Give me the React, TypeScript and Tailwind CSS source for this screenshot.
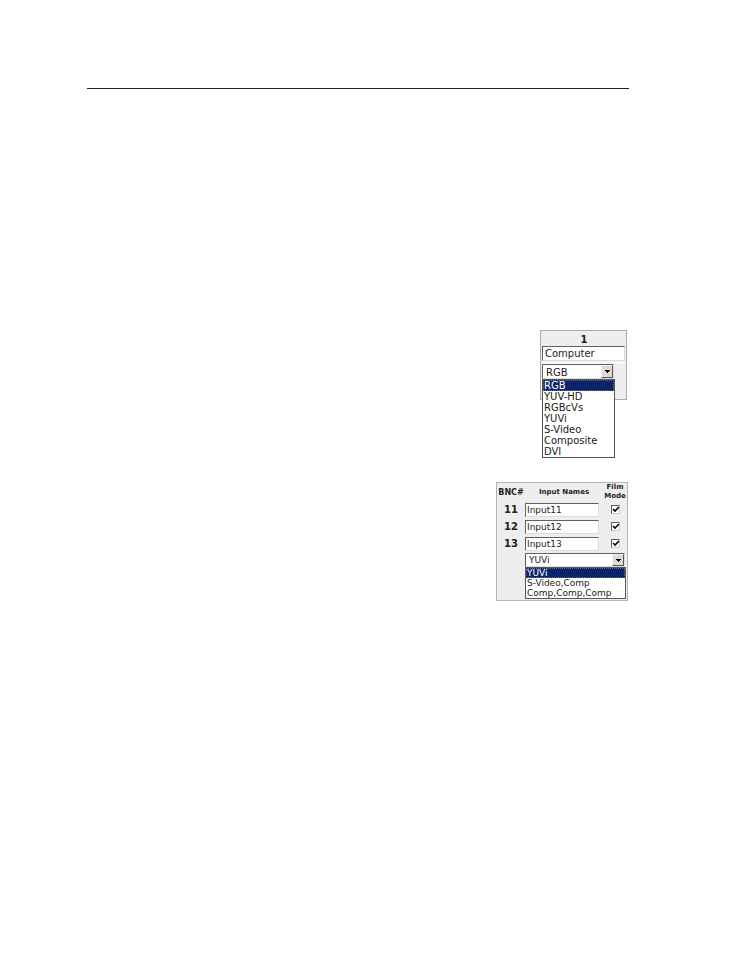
import React, { useState } from 'react';
import { clsx } from 'clsx';

const inputTypes = ['RGB', 'YUV-HD', 'RGBcVs', 'YUVi', 'S-Video', 'Composite', 'DVI'];
const bncTypes = ['YUVi', 'S-Video,Comp', 'Comp,Comp,Comp'];
const bncRows = [
  { id: 11, name: 'Input11' },
  { id: 12, name: 'Input12' },
  { id: 13, name: 'Input13' },
];

const fieldStyle =
  'block rounded-none bg-white border border-t-[#606060] border-l-[#606060] border-r-[#dcdcdc] border-b-[#dcdcdc] text-[#222] outline-none';

const OpenSelect = ({
  label,
  options,
  className,
  rowClass,
}: {
  label: string;
  options: string[];
  className?: string;
  rowClass: string;
}) => {
  const [value, setValue] = useState(options[0]);

  return (
    <div className={clsx('relative', className)}>
      <select
        aria-label={label}
        value={value}
        onChange={(e) => setValue(e.target.value)}
        className={clsx(fieldStyle, 'appearance-none w-full h-full pl-[3px]')}>
        {options.map((item) => (
          <option key={item}>{item}</option>
        ))}
      </select>
      <span className="absolute right-px inset-y-px w-3 flex items-center justify-center bg-[#dedad5] border border-t-[#f4f4f4] border-l-[#f4f4f4] border-r-[#555] border-b-[#555] pointer-events-none">
        <svg viewBox="0 0 5 3" className="w-[5px] h-[3px]" shapeRendering="crispEdges">
          <path d="M0 0h5v1h-1v1h-1v1h-1v-1h-1v-1h-1z" fill="#000" />
        </svg>
      </span>
      {/* Dropped down list */}
      <ul
        role="listbox"
        aria-label={label}
        className="absolute top-full left-0 -right-px z-10 bg-white border border-[#555] text-[#222]">
        {options.map((item) => (
          <li
            key={item}
            role="option"
            aria-selected={item === value}
            onClick={() => setValue(item)}
            className={clsx(
              'whitespace-nowrap cursor-default',
              rowClass,
              item === value && 'bg-[#0a246a] text-white outline-1 -outline-offset-1 outline-dotted outline-[#6a6a70]'
            )}>
            {item}
          </li>
        ))}
      </ul>
    </div>
  );
};

const InputPanel = () => (
  <section className="w-[87px] h-[70px] mr-px bg-[#eee] border border-[#aaa] pl-px text-[10px]">
    <h2 className="h-[15px] leading-[17px] text-center font-bold text-[#222]">1</h2>
    <input
      aria-label="Input 1 name"
      defaultValue="Computer"
      className={clsx(fieldStyle, 'w-[83px] h-[15px] pl-0.5')}
    />
    <div className="h-0.5 mt-px bg-[#f8f8f8]" />
    <OpenSelect
      label="Input 1 type"
      options={inputTypes}
      className="w-[72px] h-[15px]"
      rowClass="h-[11px] leading-[11px] pl-px"
    />
  </section>
);

const BncPanel = () => (
  <section className="w-[132px] h-[119px] bg-[#eee] border border-[#b4b4b4] text-[9px] text-[#222]">
    <table className="w-full table-fixed border-collapse">
      <thead>
        <tr className="h-[18px] text-[7px] leading-[9px]">
          <th className="w-7 p-0 text-[8px]">BNC#</th>
          <th className="p-0">Input Names</th>
          <th className="w-6 p-0">
            Film
            <br />
            Mode
          </th>
        </tr>
      </thead>
      <tbody>
        {bncRows.map((row) => (
          <tr key={row.id} className="h-[17px]">
            <th className="p-0 text-[10px] leading-3">{row.id}</th>
            <td className="p-0">
              <input
                aria-label={`Input name ${row.id}`}
                defaultValue={row.name}
                className={clsx(fieldStyle, 'w-[74px] h-3.5 pl-px')}
              />
            </td>
            <td className="p-0">
              <label className="relative block size-[9px] mx-auto">
                <input
                  type="checkbox"
                  defaultChecked
                  aria-label={`Film mode ${row.id}`}
                  className="peer block size-[9px] appearance-none bg-white border border-t-[#606060] border-l-[#606060] border-r-[#ccc] border-b-[#ccc]"
                />
                <svg viewBox="0 0 9 9" className="absolute inset-0 size-[9px] hidden peer-checked:block pointer-events-none">
                  <path d="M2 4l2 2l4-4" stroke="#000" strokeWidth="1.6" fill="none" />
                </svg>
              </label>
            </td>
          </tr>
        ))}
      </tbody>
    </table>
    <OpenSelect
      label="Input 13 type"
      options={bncTypes}
      className="w-[100px] h-3.5 ml-7 mt-px"
      rowClass="h-[10px] leading-[10px] pl-px"
    />
  </section>
);

const App = () => {
  return (
    <main className="min-h-screen bg-white pl-[87px] pr-[108px] pt-[88px] font-['DejaVu_Sans',Verdana,sans-serif]">
      <hr className="border-0 h-px bg-[#222]" />
      <div className="flex flex-col items-end mt-[241px] gap-[82px] pr-px">
        <InputPanel />
        <BncPanel />
      </div>
    </main>
  );
};

export default App;
